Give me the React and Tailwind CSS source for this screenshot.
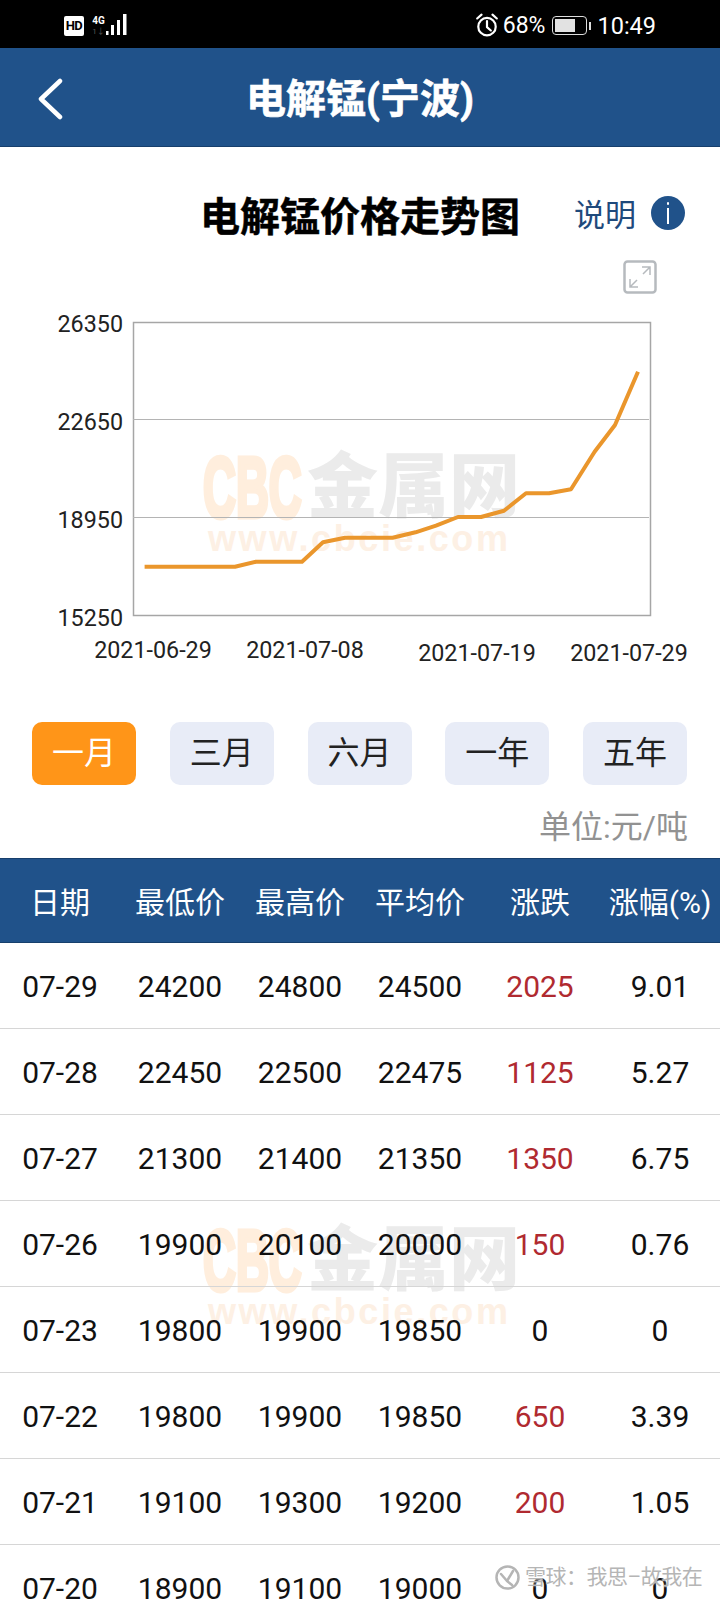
const linePoints = "144.6,566.7 235,566.7 256,561.7 302,561.7 323,542.3 345,537.7 392.6,537.7 415.5,532.3 436,525.7 458,517 481,517 504,510.7 526,493.3 549,493.3 571,489.3 594.6,451.7 615,425 638,371.7";

const rows = [
  ["07-29", "24200", "24800", "24500", "2025", "9.01"],
  ["07-28", "22450", "22500", "22475", "1125", "5.27"],
  ["07-27", "21300", "21400", "21350", "1350", "6.75"],
  ["07-26", "19900", "20100", "20000", "150", "0.76"],
  ["07-23", "19800", "19900", "19850", "0", "0"],
  ["07-22", "19800", "19900", "19850", "650", "3.39"],
  ["07-21", "19100", "19300", "19200", "200", "1.05"],
  ["07-20", "18900", "19100", "19000", "0", "0"],
];

const headers = ["日期", "最低价", "最高价", "平均价", "涨跌", "涨幅(%)"];
const ranges = ["一月", "三月", "六月", "一年", "五年"];

function Watermark({ className }) {
  return (
    <div className={`absolute left-[204px] w-[320px] h-[100px] ${className}`}>
      <div className="absolute left-[-1px] top-[-16px] text-[86px] leading-[100px] font-bold text-[#ffeedd] origin-left scale-x-[0.53] [-webkit-text-stroke:5px_#ffeedd] font-['Liberation_Sans',sans-serif]">CBC</div>
      <div className="absolute left-[103px] top-[-6px] text-[71px] leading-[80px] font-black whitespace-nowrap text-[#ebebeb]">金属网</div>
      <div className="absolute left-[4px] top-[66px] text-[36px] leading-[40px] font-bold whitespace-nowrap tracking-[2.6px] text-[#fdf0e4] font-['Liberation_Sans',sans-serif]">www.cbcie.com</div>
    </div>
  );
}

function StatusBar() {
  return (
    <div className="h-[48px] pt-[3px] bg-black text-white flex items-center justify-between pl-[64px] pr-[64px]">
      <div className="flex items-center">
        <div className="w-[20px] h-[20px] bg-white rounded-[2px] text-black text-[13px] leading-[20px] font-bold text-center tracking-[-0.5px]">HD</div>
        <div className="ml-[8px] w-[13px] flex flex-col items-center">
          <span className="text-[10px] leading-[11px] font-bold">4G</span>
          <span className="text-[8px] leading-[9px] text-[#555] mt-[1px]">1↓</span>
        </div>
        <svg width="23" height="24" viewBox="0 0 23 24" className="mt-[-2px]">
          <rect x="1" y="18" width="2.5" height="4" fill="#fff" />
          <rect x="6" y="12" width="3" height="10" fill="#fff" />
          <rect x="12" y="7" width="3" height="15" fill="#fff" />
          <rect x="18" y="1" width="3.5" height="21" fill="#fff" />
        </svg>
      </div>
      <div className="flex items-center">
        <svg width="24" height="24" viewBox="0 0 22 22" fill="none" stroke="#fff" strokeWidth="2" strokeLinecap="round" strokeLinejoin="round" className="mt-[-2px]">
          <circle cx="11" cy="12.5" r="8" />
          <path d="M11 7.5v5.5l3.5 3" />
          <path d="M2 5l4-3.5M20 5l-4-3.5" />
        </svg>
        <span className="ml-[4px] text-[23px] leading-[26px]">68%</span>
        <div className="ml-[7px] flex items-center">
          <div className="w-[35px] h-[19px] border-[1.5px] border-[#ddd] rounded-[4px] p-[2px]">
            <div className="w-[68%] h-full bg-[#e2e2e2]" />
          </div>
          <div className="ml-[2px] w-[2px] h-[8px] bg-[#ddd]" />
        </div>
        <span className="ml-[6px] text-[23.5px] leading-[26px]">10:49</span>
      </div>
    </div>
  );
}

function Chart() {
  const textClass = "text-[23.3px] fill-[#222]";
  return (
    <svg width="720" height="428" viewBox="0 294 720 428" className="relative block">
      <rect x="133.5" y="322.5" width="517" height="293" fill="none" stroke="#a6a6a6" strokeWidth="1.5" />
      <line x1="133" y1="419.5" x2="649" y2="419.5" stroke="#b4b4b4" strokeWidth="1" />
      <line x1="133" y1="517.5" x2="649" y2="517.5" stroke="#b4b4b4" strokeWidth="1" />
      <polyline points={linePoints} fill="none" stroke="#ea962c" strokeWidth="4" strokeLinejoin="round" />
      <text x="123" y="332" textAnchor="end" className={textClass}>26350</text>
      <text x="123" y="430" textAnchor="end" className={textClass}>22650</text>
      <text x="123" y="528" textAnchor="end" className={textClass}>18950</text>
      <text x="123" y="626" textAnchor="end" className={textClass}>15250</text>
      <text x="153" y="658" textAnchor="middle" className={textClass}>2021-06-29</text>
      <text x="305" y="658" textAnchor="middle" className={textClass}>2021-07-08</text>
      <text x="477" y="661" textAnchor="middle" className={textClass}>2021-07-19</text>
      <text x="629" y="661" textAnchor="middle" className={textClass}>2021-07-29</text>
    </svg>
  );
}

export default function App() {
  return (
    <div className="relative w-[720px] h-[1600px] overflow-hidden bg-white text-black font-['Roboto','Noto_Sans_CJK_SC',sans-serif]">
      <StatusBar />

      <div className="h-[99px] bg-[#20528a] border-b border-[#173f6c] relative flex items-center justify-center">
        <svg width="30" height="42" viewBox="0 0 30 42" fill="none" stroke="#fff" strokeWidth="4.5" strokeLinecap="round" strokeLinejoin="round" className="absolute left-[35px] top-[30px]">
          <path d="M25 3L6 21l19 18" />
        </svg>
        <h1 className="mt-[6px] text-[40px] leading-[50px] font-bold text-white [-webkit-text-stroke:0.6px_#fff]">电解锰(宁波)</h1>
      </div>

      <div className="h-[113px] pt-[41px] grid grid-cols-[1fr_auto_1fr]">
        <div />
        <div className="h-[60px] text-[40px] leading-[60px] font-bold text-center [-webkit-text-stroke:0.5px_#000]">电解锰价格走势图</div>
        <div className="h-[60px] flex items-center justify-end pr-[35px]">
          <span className="text-[31px] leading-[40px] text-[#1f4a7c] mt-[-4px]">说明</span>
          <div className="ml-[15px] mt-[-10px] w-[34px] h-[34px] rounded-full bg-[#20528a] flex flex-col items-center justify-center">
            <div className="w-[2.5px] h-[3px] bg-white rounded-full" />
            <div className="mt-[3px] w-[2px] h-[16px] bg-white" />
          </div>
        </div>
      </div>

      <div className="h-[34px] flex justify-end pr-[63px]">
        <svg width="34" height="34" viewBox="0 0 34 34" fill="none" stroke="#b6babe" strokeWidth="2.5">
          <rect x="1.5" y="1.5" width="31" height="31" rx="3" />
          <path d="M20 14L27 7M19 7h8v8M7 19v8h8M7 27l7-7" strokeWidth="1.5" />
        </svg>
      </div>

      <div className="relative h-[428px]">
        <Watermark className="top-[159px]" />
        <Chart />
      </div>

      <div className="h-[63px] pl-[32px] pr-[33px] flex justify-between">
        {ranges.map((range, i) => (
          <button
            key={range}
            className={`w-[104px] h-[63px] rounded-[10px] text-[32px] leading-[63px] ${i === 0 ? "bg-[#ff9518] text-white" : "bg-[#e8ecf7] text-[#222]"}`}
          >
            {range}
          </button>
        ))}
      </div>

      <div className="h-[73px] pt-[22px] pr-[32px] text-right text-[32px] leading-[40px] text-[#929292]">单位:元/吨</div>

      <div className="h-[85px] pt-[3px] bg-[#20528a] border-y border-[#173f6c] grid grid-cols-6 items-center text-center text-white text-[30px]">
        {headers.map((h) => (
          <div key={h} className="whitespace-nowrap">{h}</div>
        ))}
      </div>

      <div className="relative">
        <Watermark className="top-[283px]" />
        {rows.map((row) => (
          <div key={row[0]} className="relative h-[86px] pt-[2px] border-b border-[#d6d6d6] grid grid-cols-6 items-center text-center text-[30px] leading-[40px] text-[#111]">
            {row.map((cell, i) => (
              <div key={i} className={i === 4 && cell !== "0" ? "text-[#b02a30]" : ""}>{cell}</div>
            ))}
          </div>
        ))}
      </div>

      <div className="absolute left-[495px] top-[1564px] flex items-center text-[#b5b5b5] text-[21px] leading-[26px] whitespace-nowrap [text-shadow:0_0_2px_#fff]">
        <svg width="25" height="25" viewBox="0 0 25 25" fill="none" stroke="#b5b5b5" strokeWidth="2.5" strokeLinecap="round">
          <circle cx="12.5" cy="12.5" r="11" />
          <path d="M6 9l6 7M18 6l-6 10M12 16l5 4" />
        </svg>
        <span className="ml-[5px] tracking-[-0.5px]">雪球：我思–故我在</span>
      </div>
    </div>
  );
}
